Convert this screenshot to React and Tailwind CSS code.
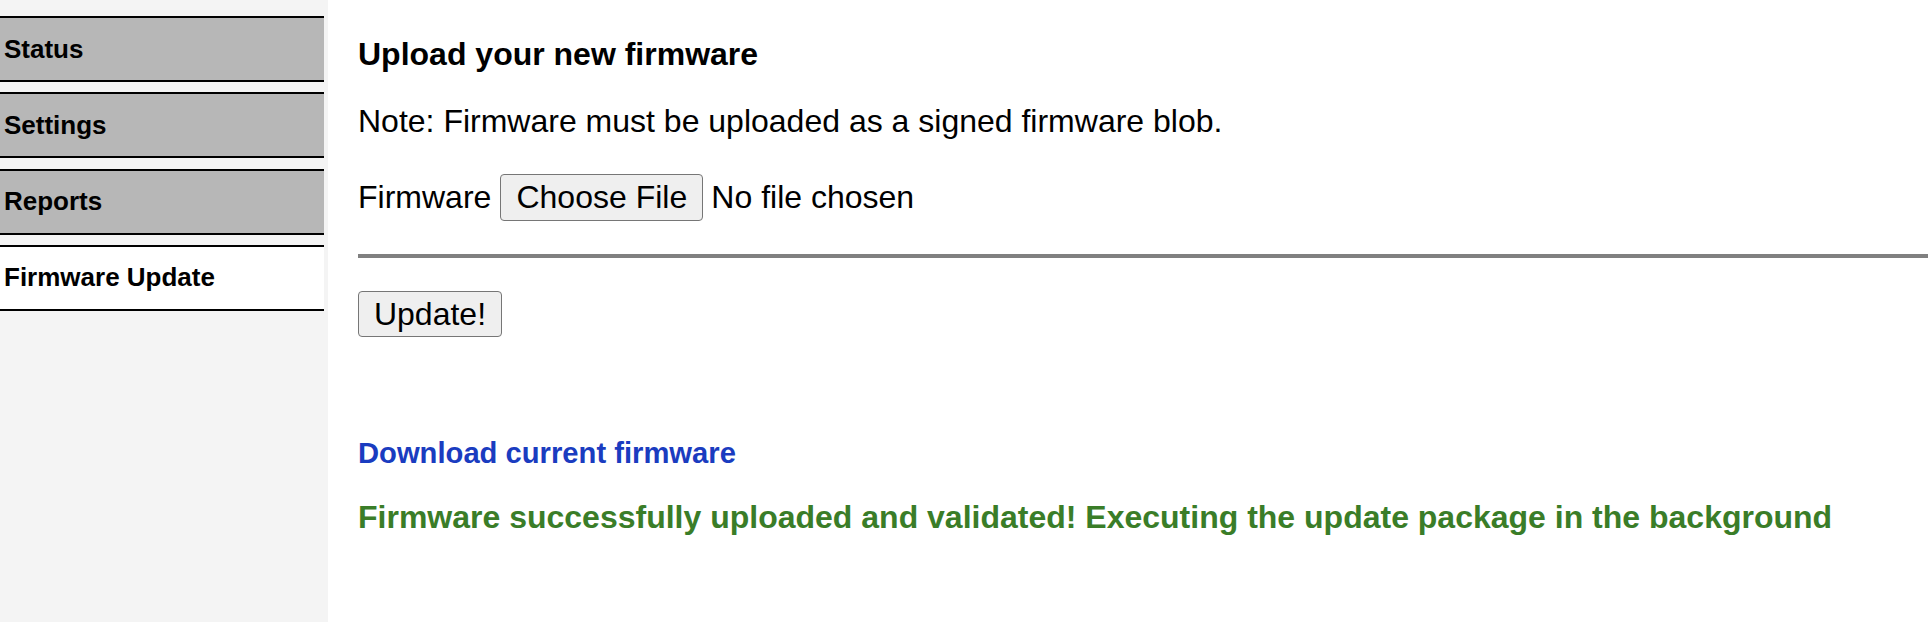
import React from 'react';

const menu = [
  { label: 'Status', active: false },
  { label: 'Settings', active: false },
  { label: 'Reports', active: false },
  { label: 'Firmware Update', active: true },
];

const Sidebar = () => (
  <div className="w-[328px] shrink-0 bg-[#f4f4f4] pt-4 flex flex-col gap-[10.3px]">
    {menu.map((item) => (
      <div
        key={item.label}
        className={`w-[324px] h-[66px] border-y-2 border-black flex items-center pl-1 text-[26px] font-bold text-black ${
          item.active ? 'bg-white' : 'bg-[#b7b7b7]'
        }`}
      >
        {item.label}
      </div>
    ))}
  </div>
);

export default function App() {
  return (
    <div
      className="flex min-h-screen bg-white text-black"
      style={{ fontFamily: '"Liberation Sans", Arial, sans-serif' }}
    >
      <Sidebar />
      <main className="flex-1 pl-[30px] pt-9">
        <h3 className="text-[32px] leading-[36px] font-bold">Upload your new firmware</h3>
        <p className="mt-[31px] text-[32px] leading-[36px]">
          Note: Firmware must be uploaded as a signed firmware blob.
        </p>
        <div className="mt-[35px] flex items-baseline text-[32px]">
          <span className="leading-[36px]">Firmware</span>
          <button className="ml-[9px] w-[203px] h-[47px] leading-[45px] bg-[#efefef] border border-[#767676] rounded-[4px] text-[32px] text-black">
            Choose File
          </button>
          <span className="ml-[8px] leading-[36px]">No file chosen</span>
        </div>
        <hr className="mt-[33px] border-0 h-1 bg-[#808080]" />
        <button className="mt-[33px] w-[144px] h-[46px] leading-[44px] bg-[#efefef] border border-[#767676] rounded-[4px] text-[32px] text-black">
          Update!
        </button>
        <div className="mt-[99px]">
          <a href="#" className="text-[29.2px] leading-[34px] font-bold text-[#1a3cc0] no-underline">
            Download current firmware
          </a>
        </div>
        <p className="mt-[29px] text-[32px] leading-[36px] font-bold text-[#3a7d28]">
          Firmware successfully uploaded and validated! Executing the update package in the background
        </p>
      </main>
    </div>
  );
}
